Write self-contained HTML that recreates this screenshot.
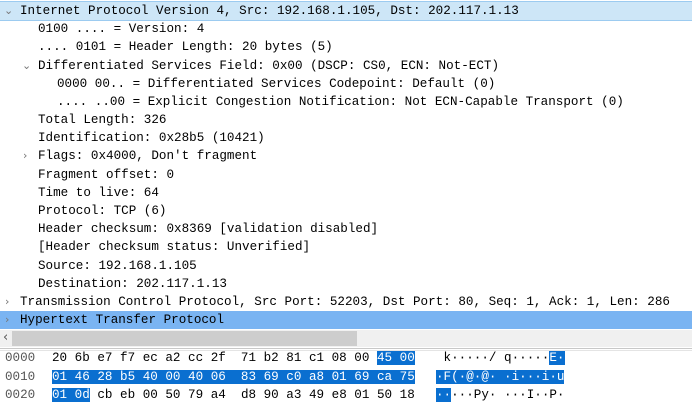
<!DOCTYPE html><html><head><style>
body{margin:0;width:692px;height:407px;background:#fff;overflow:hidden;font-family:"Liberation Mono",monospace;color:#000}
.r{position:absolute;left:0;width:692px;height:18px;line-height:18px;font-size:12.6px;white-space:pre}
.a{position:absolute;color:#777;font-family:"DejaVu Sans",sans-serif;font-size:11px}
.h{position:absolute;left:0;font-size:12.6px;white-space:pre;height:18px;line-height:18px}
.s{background:#0a6fd0;color:#fff}
</style></head><body>
<div class="r" style="top:1px;background:#cde6f7;border-top:1px solid #9ccbf0;border-bottom:1px solid #9ccbf0;height:18px;line-height:18px"><span class="a" style="left:4px">⌄</span><span style="position:absolute;left:20px">Internet Protocol Version 4, Src: 192.168.1.105, Dst: 202.117.1.13</span></div>
<div class="r" style="top:20px"><span style="position:absolute;left:38px">0100 .... = Version: 4</span></div>
<div class="r" style="top:38px"><span style="position:absolute;left:38px">.... 0101 = Header Length: 20 bytes (5)</span></div>
<div class="r" style="top:57px"><span class="a" style="left:22px">⌄</span><span style="position:absolute;left:38px">Differentiated Services Field: 0x00 (DSCP: CS0, ECN: Not-ECT)</span></div>
<div class="r" style="top:75px"><span style="position:absolute;left:57px">0000 00.. = Differentiated Services Codepoint: Default (0)</span></div>
<div class="r" style="top:93px"><span style="position:absolute;left:57px">.... ..00 = Explicit Congestion Notification: Not ECN-Capable Transport (0)</span></div>
<div class="r" style="top:111px"><span style="position:absolute;left:38px">Total Length: 326</span></div>
<div class="r" style="top:129px"><span style="position:absolute;left:38px">Identification: 0x28b5 (10421)</span></div>
<div class="r" style="top:147px"><span class="a" style="left:23px">›</span><span style="position:absolute;left:38px">Flags: 0x4000, Don't fragment</span></div>
<div class="r" style="top:166px"><span style="position:absolute;left:38px">Fragment offset: 0</span></div>
<div class="r" style="top:184px"><span style="position:absolute;left:38px">Time to live: 64</span></div>
<div class="r" style="top:202px"><span style="position:absolute;left:38px">Protocol: TCP (6)</span></div>
<div class="r" style="top:220px"><span style="position:absolute;left:38px">Header checksum: 0x8369 [validation disabled]</span></div>
<div class="r" style="top:238px"><span style="position:absolute;left:38px">[Header checksum status: Unverified]</span></div>
<div class="r" style="top:257px"><span style="position:absolute;left:38px">Source: 192.168.1.105</span></div>
<div class="r" style="top:275px"><span style="position:absolute;left:38px">Destination: 202.117.1.13</span></div>
<div class="r" style="top:293px"><span class="a" style="left:5px">›</span><span style="position:absolute;left:20px">Transmission Control Protocol, Src Port: 52203, Dst Port: 80, Seq: 1, Ack: 1, Len: 286</span></div>
<div class="r" style="top:311px;background:#7ab4f2"><span class="a" style="left:5px">›</span><span style="position:absolute;left:20px">Hypertext Transfer Protocol</span></div>
<div style="position:absolute;top:330px;left:0;width:692px;height:17px;background:#f0f0f0"></div>
<div style="position:absolute;top:331px;left:12px;width:345px;height:15px;background:#cdcdcd"></div>
<div class="a" style="top:330px;left:3px;font-size:13px;color:#555">‹</div>
<div style="position:absolute;top:348px;left:0;width:692px;height:1px;background:#c8c8c8"></div>
<div style="position:absolute;top:350px;left:0;width:692px;height:1px;background:#e4e4e4"></div>
<div class="h" style="top:349px"><span style="position:absolute;left:5px;color:#555">0000</span><span style="position:absolute;left:52px">20 6b e7 f7 ec a2 cc 2f  71 b2 81 c1 08 00 <span class="s">45 00</span></span><span style="position:absolute;left:436px"> k·····/ q·····<span class="s">E·</span></span></div>
<div class="h" style="top:368px"><span style="position:absolute;left:5px;color:#555">0010</span><span style="position:absolute;left:52px"><span class="s">01 46 28 b5 40 00 40 06  83 69 c0 a8 01 69 ca 75</span></span><span style="position:absolute;left:436px"><span class="s">·F(·@·@· ·i···i·u</span></span></div>
<div class="h" style="top:386px"><span style="position:absolute;left:5px;color:#555">0020</span><span style="position:absolute;left:52px"><span class="s">01 0d</span> cb eb 00 50 79 a4  d8 90 a3 49 e8 01 50 18</span><span style="position:absolute;left:436px"><span class="s">··</span>···Py· ···I··P·</span></div>
</body></html>
